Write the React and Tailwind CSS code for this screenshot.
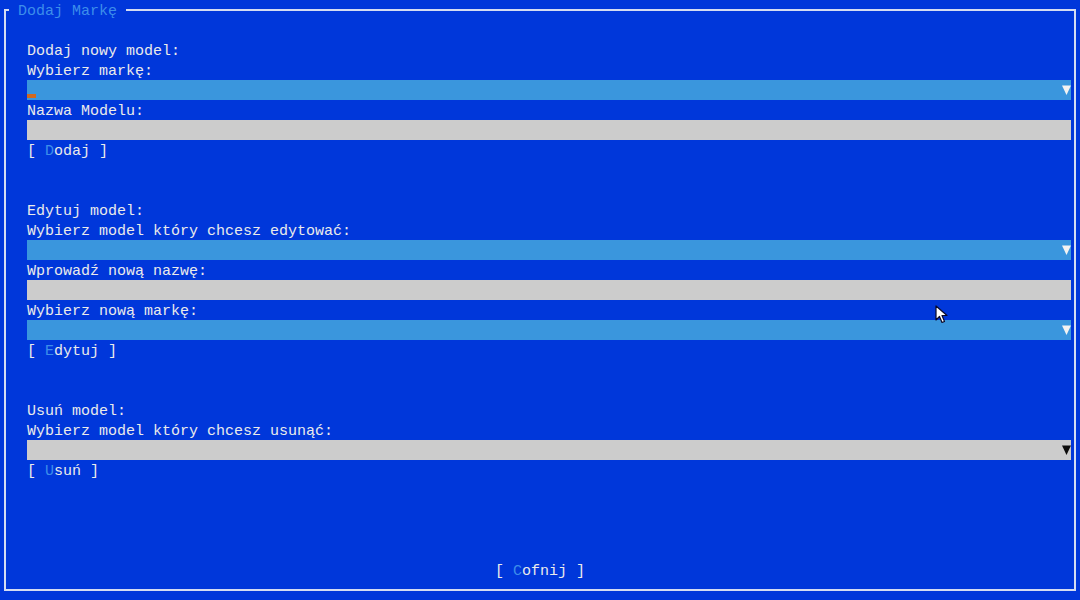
import React from 'react';

const TEXT = 'text-[#ebebeb]';

function Row({ children, className = '' }) {
  return <div className={`h-[20px] pt-[4px] flex items-center whitespace-pre ${className}`}>{children}</div>;
}

function Arrow({ color }) {
  return (
    <svg width="9" height="20" viewBox="0 0 9 20" className="shrink-0">
      <polygon points="0,5.5 9,5.5 4.5,15" fill={color} />
    </svg>
  );
}

function Combo({ gray = false, cursor = false }) {
  return (
    <div className={`h-[20px] flex items-stretch ${gray ? 'bg-[#cccccc]' : 'bg-[#3a96dd]'}`}>
      <div className="flex-1 relative">
        {cursor && <div className="absolute left-0 top-[14px] w-[9px] h-[4px] bg-[#d2691e]" />}
      </div>
      <Arrow color={gray ? '#0c0c0c' : '#f2f2f2'} />
    </div>
  );
}

function Field() {
  return <div className="h-[20px] bg-[#cccccc]" />;
}

function Btn({ hot, rest }) {
  return (
    <Row className={TEXT}>
      {'[ '}
      <span className="text-[#3d8eea]">{hot}</span>
      {rest + ' ]'}
    </Row>
  );
}

const Gap = ({ n }) => <div style={{ height: n * 20 }} />;

export default function App() {
  return (
    <div
      className="relative w-[1080px] h-[600px] bg-[#0037da] overflow-hidden text-[15px] leading-[20px]"
      style={{ fontFamily: '"Liberation Mono", "DejaVu Sans Mono", monospace' }}
    >
      <fieldset className="mx-[4px] h-[591px] border-2 border-[#d4dcf2] p-0">
        <legend className="ml-[3px] px-[9px] h-[20px] pt-[2px] leading-[20px] text-[#3d8eea]">Dodaj Markę</legend>

        <div className="pl-[21px] pr-[3px] pt-[20px] flex flex-col">
          <Row className={TEXT}>Dodaj nowy model:</Row>
          <Row className={TEXT}>Wybierz markę:</Row>
          <Combo cursor />
          <Row className={TEXT}>Nazwa Modelu:</Row>
          <Field />
          <Btn hot="D" rest="odaj" />

          <Gap n={2} />

          <Row className={TEXT}>Edytuj model:</Row>
          <Row className={TEXT}>Wybierz model który chcesz edytować:</Row>
          <Combo />
          <Row className={TEXT}>Wprowadź nową nazwę:</Row>
          <Field />
          <Row className={TEXT}>Wybierz nową markę:</Row>
          <Combo />
          <Btn hot="E" rest="dytuj" />

          <Gap n={2} />

          <Row className={TEXT}>Usuń model:</Row>
          <Row className={TEXT}>Wybierz model który chcesz usunąć:</Row>
          <Combo gray />
          <Btn hot="U" rest="suń" />

          <Gap n={4} />

          <div className="flex justify-center pr-[18px]">
            <Btn hot="C" rest="ofnij" />
          </div>
        </div>
      </fieldset>

      <svg className="absolute left-[935px] top-[305px]" width="14" height="20" viewBox="0 0 14 20">
        <path d="M1 1 L1 15 L4.5 11.5 L7 17.5 L9.5 16.5 L7 10.5 L12 10.5 Z" fill="#ffffff" stroke="#0a0a28" strokeWidth="1.2" strokeLinejoin="round" />
      </svg>
    </div>
  );
}
